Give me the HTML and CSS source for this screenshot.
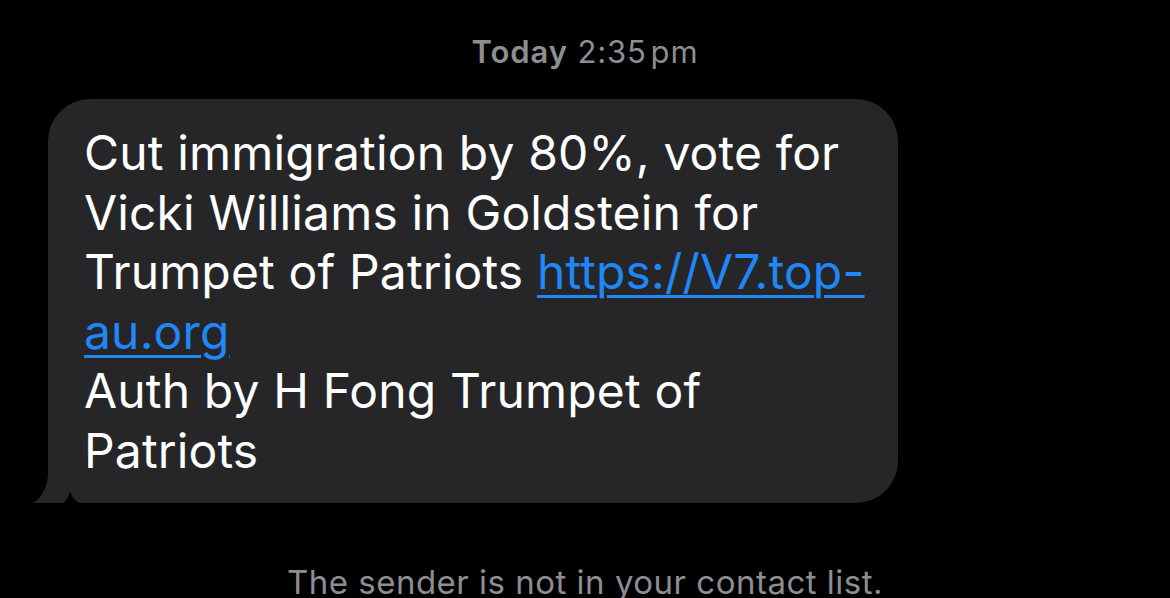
FILE: index.html
```html
<!DOCTYPE html>
<html>
<head>
<meta charset="utf-8">
<link rel="stylesheet" href="styles.css">
</head>
<body>
<div class="screen">
  <div class="stamp"><span class="day">Today</span> 2:35&#8202;pm</div>
  <div class="row">
    <div class="bubble">
      <p class="msg">Cut immigration by 80%, vote for<br>Vicki Williams in Goldstein for<br>Trumpet of Patriots <a href="#">https://V7.top-<br>au.org</a><br>Auth by H Fong Trumpet of<br>Patriots</p>
      <svg class="tail" width="56" height="46" viewBox="0 0 56 46"><path d="M16 0 L16 14 C16 28 11 38 1 45 L56 45 L56 0 Z" fill="#262629"/><path d="M30 46 C34 43 37 39 38 33 C40 40 44 44 50 46 Z" fill="#000"/></svg>
    </div>
  </div>
  <div class="note">The sender is not in your contact list.</div>
</div>
</body>
</html>
```
FILE: styles.css
```css
html, body {
  margin: 0;
  padding: 0;
  background: #000;
}
.screen {
  width: 1170px;
  height: 598px;
  overflow: hidden;
  font-family: Inter, "Liberation Sans", sans-serif;
  display: flex;
  flex-direction: column;
}
.stamp {
  margin-top: 34px;
  text-align: center;
  color: #8d8d92;
  font-size: 31px;
  line-height: 36px;
  letter-spacing: 0.9px;
}
.day {
  font-weight: 600;
}
.row {
  margin-top: 29px;
  padding-left: 48px;
  display: flex;
}
.bubble {
  position: relative;
  width: 850px;
  height: 404px;
  box-sizing: border-box;
  background: #262629;
  border-radius: 42px 42px 42px 0;
  padding: 24px 0 0 36px;
}
.msg {
  margin: 0;
  color: #fff;
  font-size: 48px;
  line-height: 59.6px;
  letter-spacing: 0.15px;
}
.msg a {
  color: #1f87f6;
  text-decoration: underline;
  text-decoration-thickness: 3px;
  text-underline-offset: 6px;
}
.tail {
  position: absolute;
  left: -16px;
  bottom: -1px;
}
.note {
  margin-top: 59px;
  text-align: center;
  color: #8d8d92;
  font-size: 33px;
  line-height: 40px;
  letter-spacing: 0.5px;
}
```
